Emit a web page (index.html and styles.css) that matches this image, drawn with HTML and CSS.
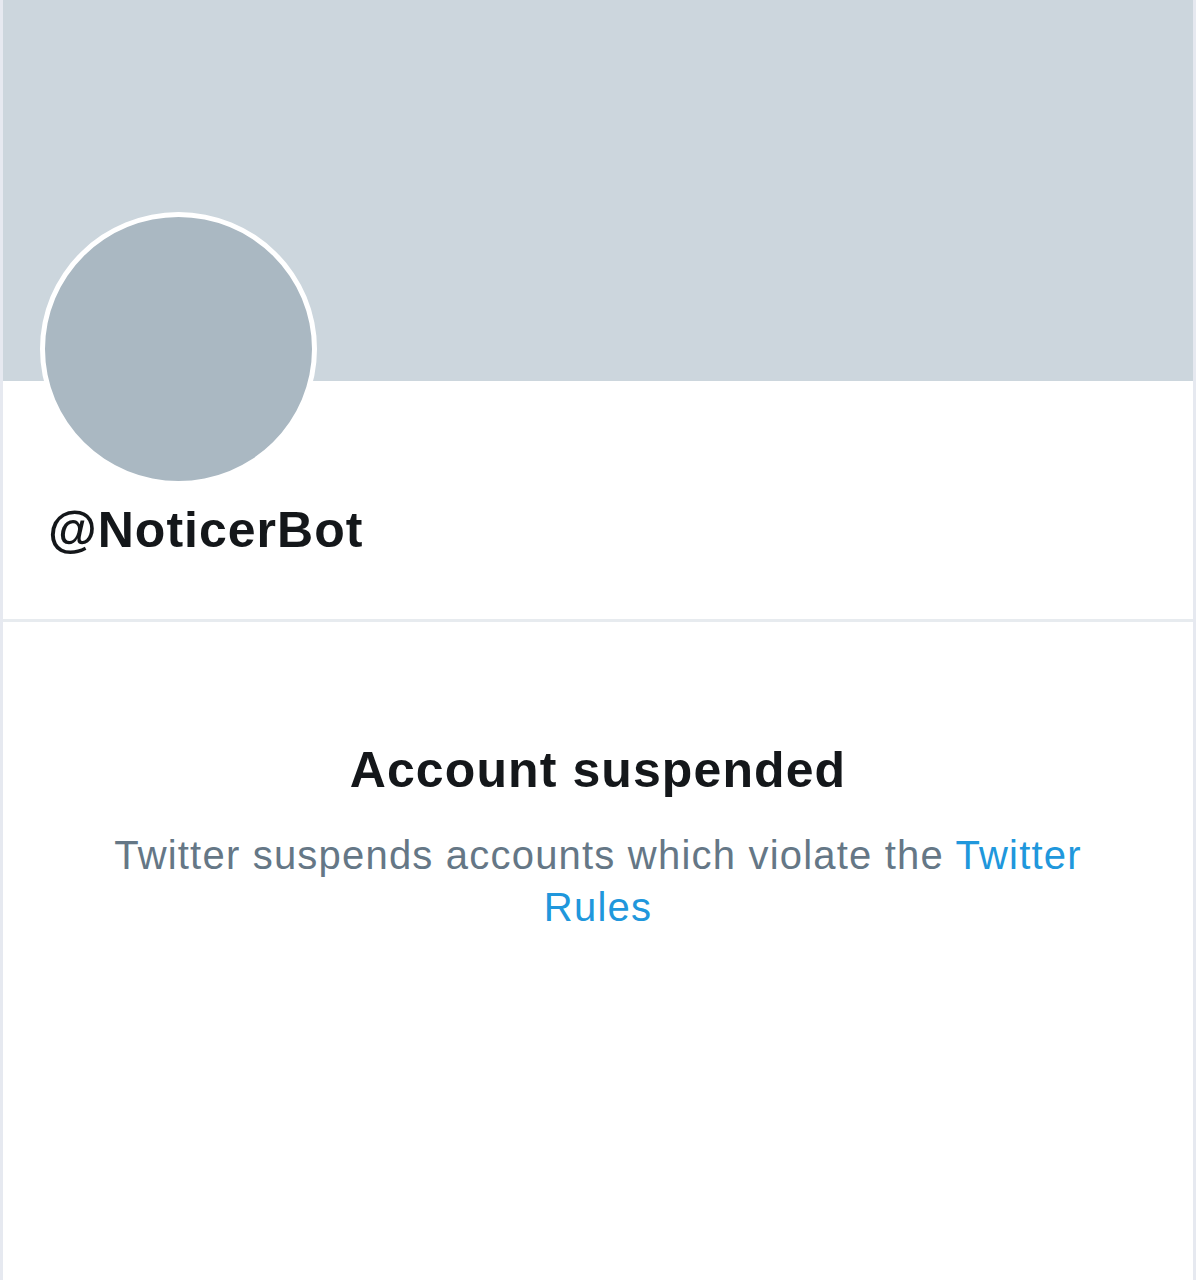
FILE: index.html
```html
<!DOCTYPE html>
<html lang="en">
<head>
<meta charset="utf-8">
<title>@NoticerBot</title>
<link rel="stylesheet" href="styles.css">
</head>
<body>
<div class="page">
  <header class="profile">
    <div class="banner"></div>
    <div class="profile-info">
      <div class="avatar"></div>
      <h1 class="handle">@NoticerBot</h1>
    </div>
  </header>
  <main class="notice">
    <h2 class="notice-title">Account suspended</h2>
    <p class="notice-text">Twitter suspends accounts which violate the <a class="notice-link" href="#">Twitter Rules</a></p>
  </main>
</div>
</body>
</html>
```

FILE: styles.css
```css
html, body {
  margin: 0;
  padding: 0;
  background: #ffffff;
}

body {
  font-family: "Liberation Sans", Arial, sans-serif;
}

.page {
  width: 1196px;
  min-height: 1280px;
  box-sizing: border-box;
  border-left: 3px solid #e6e9f0;
  border-right: 3px solid #e6e9f0;
  background: #ffffff;
}

.profile {
  border-bottom: 3px solid #e7ebef;
}

.banner {
  height: 381px;
  background: #ccd6dd;
}

.profile-info {
  padding: 0 0 64px 37px;
}

.avatar {
  width: 267px;
  height: 264px;
  margin-top: -169px;
  border: 5px solid #ffffff;
  border-radius: 50%;
  background: #aab8c2;
}

.handle {
  margin: 19px 0 0 8px;
  font-size: 50px;
  line-height: 50px;
  font-weight: 700;
  letter-spacing: 1px;
  color: #14171a;
}

.notice {
  display: flex;
  flex-direction: column;
  align-items: center;
  padding-top: 123px;
  text-align: center;
}

.notice-title {
  margin: 0;
  font-size: 50px;
  line-height: 50px;
  font-weight: 700;
  letter-spacing: 1.1px;
  color: #14171a;
}

.notice-text {
  max-width: 1000px;
  margin: 34px 0 0 0;
  font-size: 40px;
  line-height: 52px;
  letter-spacing: 1.2px;
  color: #657786;
}

.notice-link {
  color: #2097dc;
  text-decoration: none;
}
```
